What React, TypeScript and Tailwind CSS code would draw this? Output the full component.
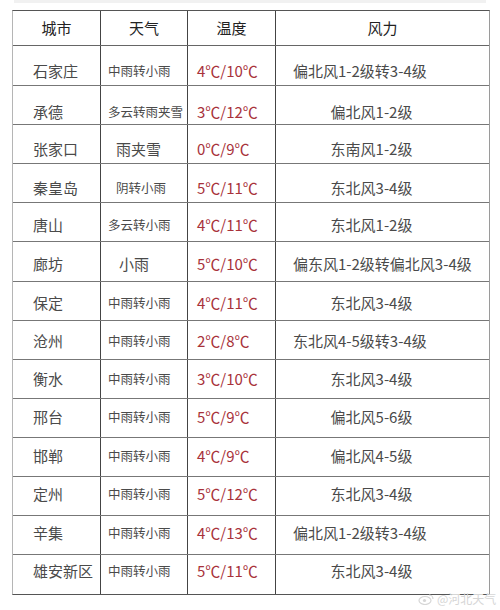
import React from "react";

type Row = {
  city: string;
  weather: string;
  wSmall: boolean;
  wPad: string;
  temp: string;
  wind: string;
  windLeft: boolean;
  h: string;
  off: string;
};

const rows: Row[] = [
  { city: "石家庄", weather: "中雨转小雨", wSmall: true, wPad: "pl-[7px]", temp: "4℃/10℃", wind: "偏北风1-2级转3-4级", windLeft: true, h: "h-[40px]", off: "translate-y-[6px]" },
  { city: "承德", weather: "多云转雨夹雪", wSmall: true, wPad: "pl-[7px]", temp: "3℃/12℃", wind: "偏北风1-2级", windLeft: false, h: "h-[39px]", off: "translate-y-[7px]" },
  { city: "张家口", weather: "雨夹雪", wSmall: false, wPad: "pl-[15px]", temp: "0℃/9℃", wind: "东南风1-2级", windLeft: false, h: "h-[39px]", off: "translate-y-[5px]" },
  { city: "秦皇岛", weather: "阴转小雨", wSmall: true, wPad: "pl-[15px]", temp: "5℃/11℃", wind: "东北风3-4级", windLeft: false, h: "h-[39px]", off: "translate-y-[5px]" },
  { city: "唐山", weather: "多云转小雨", wSmall: true, wPad: "pl-[7px]", temp: "4℃/11℃", wind: "东北风1-2级", windLeft: false, h: "h-[39px]", off: "translate-y-[3px]" },
  { city: "廊坊", weather: "小雨", wSmall: false, wPad: "pl-[18px]", temp: "5℃/10℃", wind: "偏东风1-2级转偏北风3-4级", windLeft: true, h: "h-[40px]", off: "translate-y-[3px]" },
  { city: "保定", weather: "中雨转小雨", wSmall: true, wPad: "pl-[7px]", temp: "4℃/11℃", wind: "东北风3-4级", windLeft: false, h: "h-[39px]", off: "translate-y-[2px]" },
  { city: "沧州", weather: "中雨转小雨", wSmall: true, wPad: "pl-[7px]", temp: "2℃/8℃", wind: "东北风4-5级转3-4级", windLeft: true, h: "h-[39px]", off: "translate-y-[1px]" },
  { city: "衡水", weather: "中雨转小雨", wSmall: true, wPad: "pl-[7px]", temp: "3℃/10℃", wind: "东北风3-4级", windLeft: false, h: "h-[39px]", off: "translate-y-[0px]" },
  { city: "邢台", weather: "中雨转小雨", wSmall: true, wPad: "pl-[7px]", temp: "5℃/9℃", wind: "偏北风5-6级", windLeft: false, h: "h-[39px]", off: "-translate-y-[1px]" },
  { city: "邯郸", weather: "中雨转小雨", wSmall: true, wPad: "pl-[7px]", temp: "4℃/9℃", wind: "偏北风4-5级", windLeft: false, h: "h-[39px]", off: "-translate-y-[1px]" },
  { city: "定州", weather: "中雨转小雨", wSmall: true, wPad: "pl-[7px]", temp: "5℃/12℃", wind: "东北风3-4级", windLeft: false, h: "h-[39px]", off: "-translate-y-[2px]" },
  { city: "辛集", weather: "中雨转小雨", wSmall: true, wPad: "pl-[7px]", temp: "4℃/13℃", wind: "偏北风1-2级转3-4级", windLeft: true, h: "h-[39px]", off: "-translate-y-[2px]" },
  { city: "雄安新区", weather: "中雨转小雨", wSmall: true, wPad: "pl-[7px]", temp: "5℃/11℃", wind: "东北风3-4级", windLeft: false, h: "h-[39px]", off: "-translate-y-[3px]" },
];

const font = { fontFamily: '"Noto Sans CJK SC", "Noto Sans", sans-serif' };

export default function App() {
  return (
    <div className="relative w-[500px] h-[610px] bg-white overflow-hidden" style={font}>
      <div className="h-[3px] mx-[14px] bg-[#f1f1f1]" />
      <div className="ml-[12px] mt-[7px] w-[478px] border-t border-t-[#555] border-l border-l-[#b5b5b5] border-r border-r-[#9a9a9a] border-b border-b-[#555]">
        {/* header */}
        <div className="flex h-[35px] border-b border-b-[#666] text-[15px] text-[#222]">
          <div className="w-[88px] flex items-center justify-center border-r-[1.5px] border-r-[#444]">城市</div>
          <div className="w-[87px] flex items-center justify-center border-r-[1.5px] border-r-[#444]">天气</div>
          <div className="w-[88px] flex items-center justify-center border-r-[1.5px] border-r-[#444]">温度</div>
          <div className="flex-1 flex items-center justify-center">风力</div>
        </div>
        {rows.map((r, i) => (
          <div
            key={r.city}
            className={`flex ${r.h} ${i < rows.length - 1 ? "border-b border-b-[#777]" : ""} text-[#4a4a4a]`}
          >
            <div className="w-[88px] flex items-center pl-[20px] border-r-[1.5px] border-r-[#444] text-[15px] whitespace-nowrap">
              <span className={r.off}>{r.city}</span>
            </div>
            <div className={`w-[87px] flex items-center ${r.wPad} border-r-[1.5px] border-r-[#444] whitespace-nowrap ${r.wSmall ? "text-[12.5px]" : "text-[15px]"}`}>
              <span className={r.off}>{r.weather}</span>
            </div>
            <div className="w-[88px] flex items-center pl-[9px] border-r-[1.5px] border-r-[#444] text-[15px] text-[#a8323a] whitespace-nowrap">
              <span className={r.off}>{r.temp}</span>
            </div>
            <div className={`flex-1 flex items-center whitespace-nowrap text-[15px] ${r.windLeft ? "pl-[17px]" : "justify-center pr-[22px]"}`}>
              <span className={r.off}>{r.wind}</span>
            </div>
          </div>
        ))}
      </div>
      <div className="absolute left-[418px] top-[593px] flex items-center gap-[3px] text-[12px] text-[#d6d6d6] leading-none">
        <svg width="16" height="12" viewBox="0 0 16 12">
          <ellipse cx="7" cy="7.5" rx="6" ry="4" fill="none" stroke="#d6d6d6" strokeWidth="1.2" />
          <circle cx="6.5" cy="7.5" r="1.6" fill="#d6d6d6" />
          <path d="M11 2 A4 4 0 0 1 15 6" fill="none" stroke="#d6d6d6" strokeWidth="1.2" />
        </svg>
        <span>@河北天气</span>
      </div>
    </div>
  );
}
